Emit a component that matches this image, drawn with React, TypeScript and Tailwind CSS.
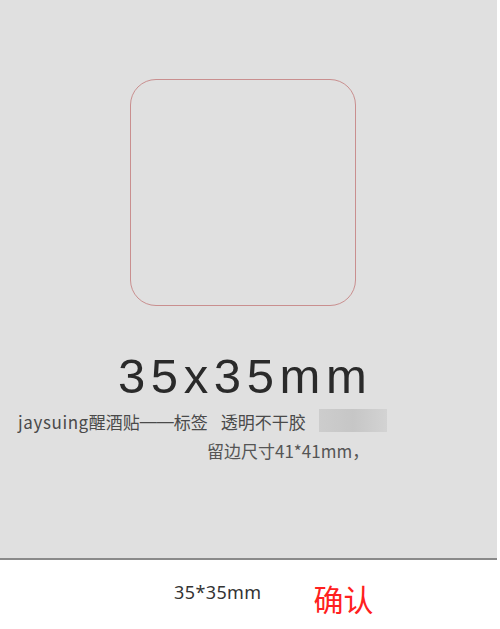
export default function App() {
  return (
    <div className="w-[500px] h-[629px] bg-white overflow-hidden font-['Noto_Sans','Noto_Sans_CJK_SC',sans-serif]">
      <div className="h-[560px] w-[497px] bg-[#e0e0e0] border-b-2 border-[#8a8a8a] flex flex-col">
        {/* sticker outline */}
        <div className="mt-[79px] ml-[130px] w-[226px] h-[227px] rounded-[26px] border border-[#c98f8f]" />

        <div className="mt-[42px] ml-[118px] font-['Liberation_Sans',Arial,sans-serif] text-[49px] leading-[56px] tracking-[5.6px] text-[#2a2a2a]">
          35x35mm
        </div>

        <div className="mt-[6px] ml-[18px] flex items-center h-[24px] text-[17px] leading-[24px] text-[#4a4a4a] font-['Noto_Sans_CJK_SC',sans-serif]">
          <span className="tracking-[0.6px]">jaysuing</span>
          <span>醒酒贴</span>
          <span className="font-['Liberation_Sans',sans-serif]">——</span>
          <span>标签</span>
          <span className="ml-[13px]">透明不干胶</span>
          <span className="ml-[13px] w-[68px] h-[23px] -mt-[4px] bg-gradient-to-r from-[#cdcdcd] via-[#c6c6c6] to-[#d3d3d3]" />
        </div>

        <div className="mt-[5px] ml-[207px] text-[17px] leading-[24px] text-[#555] font-['Noto_Sans_CJK_SC',sans-serif]">
          留边尺寸41*41mm，
        </div>
      </div>

      <div className="flex items-start h-[69px]">
        <span className="ml-[174px] mt-[20px] text-[18px] leading-[24px] text-[#333] font-['Noto_Sans',sans-serif] tracking-[0.4px]">
          35*35mm
        </span>
        <span className="ml-[52px] mt-[21px] text-[30px] leading-[34px] text-[#ff2020] font-['Noto_Sans_CJK_SC',sans-serif]">
          确认
        </span>
      </div>
    </div>
  );
}
